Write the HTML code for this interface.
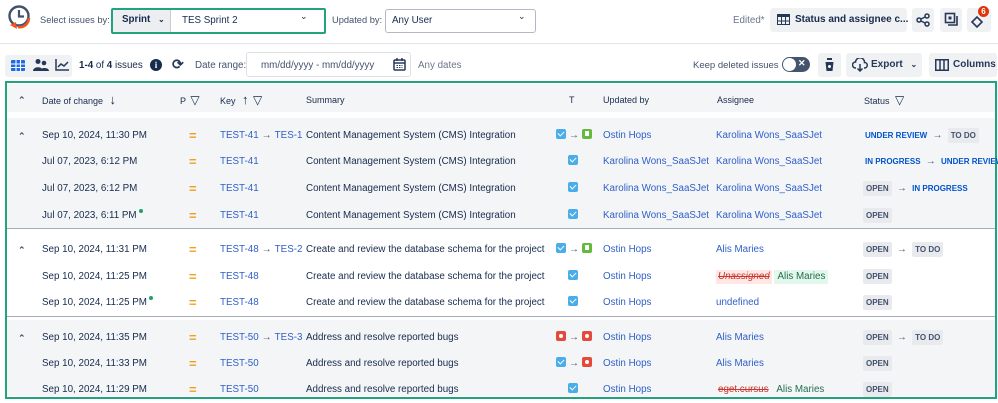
<!DOCTYPE html>
<html><head><meta charset="utf-8">
<style>
*{box-sizing:border-box;margin:0;padding:0}
body{width:998px;height:400px;overflow:hidden;background:#fff;font-family:"Liberation Sans",Arial,sans-serif;font-size:9.8px;color:#172b4d;position:relative}
.a{position:absolute;white-space:nowrap}
.lnk{color:#2f5fc9}
.btn{position:absolute;background:#f0f1f3;border-radius:3px}
.row{position:absolute;left:7px;width:989px;height:26px;line-height:26px}
.row>span{position:absolute;white-space:nowrap}
.eq{color:#f0a020;font-weight:bold;font-size:13px}
.st{font-size:8px;font-weight:bold;color:#0052cc}
.lz{display:inline-block;line-height:13px;background:#e9eaed;color:#42526e;padding:1px 3px;border-radius:2px}
.ck{display:inline-block;width:10px;height:10px;background:#4bade8;border-radius:2px;vertical-align:-1px;position:relative}
.ck:after{content:"";position:absolute;left:3px;top:1px;width:3px;height:5px;border:solid #fff;border-width:0 1.5px 1.5px 0;transform:rotate(45deg)}
.bm{display:inline-block;width:10px;height:10px;background:#63ba3c;border-radius:2px;vertical-align:-1px;position:relative}
.bm:after{content:"";position:absolute;left:3px;top:2px;width:4px;height:5px;background:#fff}
.bg{display:inline-block;width:10px;height:10px;background:#e5493a;border-radius:2px;vertical-align:-1px;position:relative}
.bg:after{content:"";position:absolute;left:3px;top:3px;width:4px;height:4px;background:#fff;border-radius:50%}
.ar{color:#42526e;font-size:10px;margin:0 3px;font-weight:normal}
.car{font-size:9px;color:#42526e;font-weight:bold}
.del{display:inline-block;line-height:14px;color:#c9372c;text-decoration:line-through;background:#ffe7e5;font-style:italic;padding:0 2px}
.add{display:inline-block;line-height:14px;color:#216e4e;background:#e3f7ec;padding:0 3px}
.dot{display:inline-block;width:4px;height:4px;background:#22a06b;border-radius:50%;vertical-align:5px;margin-left:2px}
.hd{font-size:9px;color:#172b4d}
</style></head><body>

<svg class="a" style="left:6px;top:4px" width="28" height="30" viewBox="0 0 28 30"><circle cx="13" cy="12" r="9.5" fill="none" stroke="#42526e" stroke-width="2.4"/><path d="M13 6v6.5h5" fill="none" stroke="#42526e" stroke-width="2.2"/><path d="M23 14c-.5 6-5 10-11 9" fill="none" stroke="#f0561d" stroke-width="2.6"/><path d="M4 21l6-3 1 7z" fill="#f0561d"/></svg>
<div class="a" style="left:40px;top:15px;color:#42526e;font-size:9.3px">Select issues by:</div>
<div class="a" style="left:111px;top:8px;width:215px;height:26px;border:2px solid #23a27e;border-radius:2px"></div>
<div class="a" style="left:113px;top:10px;width:57px;height:22px;background:#eceef1"></div>
<div class="a" style="left:122px;top:14px;font-weight:bold;color:#172b4d">Sprint <span style="font-size:8px;margin-left:5px">&#8964;</span></div>
<div class="a" style="left:170px;top:10px;width:1px;height:22px;background:#ccc"></div>
<div class="a" style="left:182px;top:15px">TES Sprint 2</div>
<div class="a" style="left:300px;top:11px;font-size:9px">&#8964;</div>
<div class="a" style="left:332px;top:15px;color:#42526e;font-size:9.3px">Updated by:</div>
<div class="a" style="left:385px;top:9px;width:151px;height:24px;border:1px solid #b3b9c4;border-radius:3px"></div>
<div class="a" style="left:392px;top:15px">Any User</div>
<div class="a" style="left:518px;top:11px;font-size:9px">&#8964;</div>

<div class="a" style="left:733px;top:15px;color:#6b778c">Edited*</div>
<div class="btn" style="left:770px;top:8px;width:137px;height:24px"></div>
<svg class="a" style="left:777px;top:14px" width="13" height="11"><rect x=".5" y=".5" width="12" height="10" fill="none" stroke="#253858"/><rect x="0" y="0" width="13" height="3" fill="#253858"/><path d="M4.5 0v11M8.5 0v11M0 7h13" stroke="#253858"/></svg>
<div class="a" style="left:795px;top:14px;font-weight:bold;color:#172b4d;font-size:10px">Status and assignee c...</div>
<div class="btn" style="left:912px;top:8px;width:22px;height:24px"></div>
<svg class="a" style="left:916px;top:13px" width="14" height="14"><circle cx="11" cy="3" r="2" fill="none" stroke="#253858" stroke-width="1.5"/><circle cx="3" cy="7" r="2" fill="none" stroke="#253858" stroke-width="1.5"/><circle cx="11" cy="11" r="2" fill="none" stroke="#253858" stroke-width="1.5"/><path d="M5 6l4-2M5 8l4 2" stroke="#253858" stroke-width="1.5"/></svg>
<div class="btn" style="left:940px;top:8px;width:22px;height:24px"></div>
<svg class="a" style="left:944px;top:12px" width="14" height="14"><rect x="1.5" y="1.5" width="9" height="9" fill="none" stroke="#253858" stroke-width="1.6"/><path d="M4 13h9V4" fill="none" stroke="#253858" stroke-width="1.6"/><rect x="4.5" y="4.5" width="3" height="3" fill="#253858"/></svg>
<div class="btn" style="left:967px;top:8px;width:24px;height:24px"></div>
<svg class="a" style="left:970px;top:14px" width="14" height="14"><path d="M2 8l5-5 5 5-5 5z" fill="none" stroke="#253858" stroke-width="1.6"/></svg>
<div class="a" style="left:978px;top:6px;width:11px;height:11px;border-radius:50%;background:#de350b;color:#fff;font-size:8px;font-weight:bold;text-align:center;line-height:11px">6</div>

<div class="a" style="left:0;top:43px;width:998px;height:1px;background:#e4e6ea"></div>

<div class="btn" style="left:5px;top:55px;width:67px;height:22px;background:#f0f1f3"></div>
<svg class="a" style="left:11px;top:60px" width="14" height="11"><rect width="14" height="11" rx="1" fill="#1d6ae5"/><path d="M0 4h14M0 7.5h14M5 0v11M9.5 0v11" stroke="#fff" stroke-width="1.1"/></svg>
<svg class="a" style="left:33px;top:58px" width="16" height="14"><circle cx="5" cy="3.5" r="2.5" fill="#253858"/><circle cx="11" cy="5" r="2.3" fill="#253858"/><path d="M0 13c0-5 10-5 10 0zM7 13c0-4 9-4 9 0z" fill="#253858"/></svg>
<svg class="a" style="left:55px;top:58px" width="15" height="13"><path d="M1 1v11h13" fill="none" stroke="#253858" stroke-width="1.5"/><path d="M3 9l3-3 3 2 4-4" fill="none" stroke="#253858" stroke-width="1.5"/></svg>
<div class="a" style="left:79px;top:60px"><b>1-4</b> of <b>4</b> issues</div>
<div class="a" style="left:150px;top:59px;width:12px;height:12px;border-radius:50%;background:#172b4d;color:#fff;font-size:9px;font-weight:bold;text-align:center;line-height:12px;font-family:'Liberation Serif',serif">i</div>
<div class="a" style="left:172px;top:56px;font-size:14px;font-weight:bold;color:#253858">&#10227;</div>
<div class="a" style="left:195px;top:60px;color:#42526e">Date range:</div>
<div class="a" style="left:246px;top:52px;width:165px;height:25px;border:1px solid #dfe1e6;border-radius:3px"></div>
<div class="a" style="left:261px;top:60px;color:#42526e">mm/dd/yyyy - mm/dd/yyyy</div>
<svg class="a" style="left:393px;top:58px" width="13" height="13"><rect x="1" y="2" width="11" height="10" rx="1" fill="none" stroke="#253858" stroke-width="1.5"/><path d="M1 5h11M4 0v3M9 0v3" stroke="#253858" stroke-width="1.5"/><path d="M3.5 7.5h6M3.5 9.5h6" stroke="#253858" stroke-dasharray="1.5 1"/></svg>
<div class="a" style="left:418px;top:60px;color:#6b778c">Any dates</div>

<div class="a" style="left:693px;top:60px;color:#42526e;font-size:9.5px">Keep deleted issues</div>
<div class="a" style="left:782px;top:57px;width:28px;height:15px;border-radius:8px;background:#44546f"></div>
<div class="a" style="left:783px;top:58px;width:13px;height:13px;border-radius:50%;background:#fff"></div>
<div class="a" style="left:798px;top:58px;color:#fff;font-size:9px;font-weight:bold">✕</div>
<div class="btn" style="left:818px;top:53px;width:23px;height:24px"></div>
<svg class="a" style="left:824px;top:58px" width="11" height="13"><path d="M0 2h11M3 2V0h5v2M1.5 4h8l-1 9h-6z" fill="#253858"/><circle cx="5.5" cy="8.5" r="1.5" fill="#fff"/></svg>
<div class="btn" style="left:846px;top:53px;width:76px;height:24px"></div>
<svg class="a" style="left:852px;top:58px" width="16" height="14"><path d="M4 10H3.5a3 3 0 010-6 4.5 4.5 0 019 .5 2.7 2.7 0 010 5.5H12" fill="none" stroke="#253858" stroke-width="1.5"/><path d="M8 6v7M5.5 10.5L8 13l2.5-2.5" fill="none" stroke="#253858" stroke-width="1.5"/></svg>
<div class="a" style="left:871px;top:59px;font-weight:bold;color:#253858;font-size:10px">Export <span style="font-size:8px;margin-left:5px">&#8964;</span></div>
<div class="btn" style="left:929px;top:53px;width:68px;height:24px"></div>
<svg class="a" style="left:935px;top:59px" width="14" height="12"><rect x=".75" y=".75" width="12.5" height="10.5" fill="none" stroke="#253858" stroke-width="1.5"/><path d="M5 0v12M9 0v12" stroke="#253858" stroke-width="1.5"/></svg>
<div class="a" style="left:953px;top:59px;font-weight:bold;color:#253858;font-size:10px">Columns</div>

<div class="a" style="left:7px;top:84px;width:989px;height:28px;background:#f4f5f7"></div>
<div class="a" style="left:7px;top:118px;width:989px;height:110px;background:#f4f5f7"></div>
<div class="a" style="left:7px;top:228px;width:989px;height:1px;background:#a5adba"></div>
<div class="a" style="left:7px;top:316px;width:989px;height:1px;background:#a5adba"></div>
<div class="a" style="left:7px;top:320px;width:989px;height:76px;background:#f4f5f7"></div>
<div class="a" style="left:5px;top:81px;width:992px;height:318px;border:2.5px solid #23a27e"></div>

<div class="row" style="top:87px">
<span class="car" style="left:11px">&#8963;</span>
<span class="hd" style="left:35px">Date of change <b style="font-size:13px;margin-left:4px">&#8595;</b></span>
<span class="hd" style="left:173px">P <span style="font-size:12px;margin-left:2px">&#9661;</span></span>
<span class="hd" style="left:213px">Key <b style="font-size:13px;margin-left:4px">&#8593;</b> <span style="font-size:12px;margin-left:2px">&#9661;</span></span>
<span class="hd" style="left:299px">Summary</span>
<span class="hd" style="left:562px">T</span>
<span class="hd" style="left:596px">Updated by</span>
<span class="hd" style="left:710px">Assignee</span>
<span class="hd" style="left:857px">Status <span style="font-size:12px;margin-left:3px">&#9661;</span></span>
</div>

<div class="row" style="top:123px">
<span class="car" style="left:11px">&#8963;</span><span style="left:35px">Sep 10, 2024, 11:30 PM</span><span class="eq" style="left:182px">=</span>
<span style="left:213px" class="lnk">TEST-41<span class="ar">&#8594;</span>TES-1</span><span style="left:299px">Content Management System (CMS) Integration</span>
<span style="left:549px"><i class="ck"></i><span class="ar">&#8594;</span><i class="bm"></i></span><span class="lnk" style="left:596px">Ostin Hops</span><span class="lnk" style="left:709px">Karolina Wons_SaaSJet</span>
<span class="st" style="left:858px">UNDER REVIEW <span class="ar">&#8594;</span> <span class="lz">TO DO</span></span></div>
<div class="row" style="top:149px">
<span style="left:35px">Jul 07, 2023, 6:12 PM</span><span class="eq" style="left:182px">=</span><span class="lnk" style="left:213px">TEST-41</span><span style="left:299px">Content Management System (CMS) Integration</span>
<span style="left:561px"><i class="ck"></i></span><span class="lnk" style="left:596px">Karolina Wons_SaaSJet</span><span class="lnk" style="left:709px">Karolina Wons_SaaSJet</span>
<span class="st" style="left:858px">IN PROGRESS <span class="ar">&#8594;</span> UNDER REVIEW</span></div>
<div class="row" style="top:176px">
<span style="left:35px">Jul 07, 2023, 6:12 PM</span><span class="eq" style="left:182px">=</span><span class="lnk" style="left:213px">TEST-41</span><span style="left:299px">Content Management System (CMS) Integration</span>
<span style="left:561px"><i class="ck"></i></span><span class="lnk" style="left:596px">Karolina Wons_SaaSJet</span><span class="lnk" style="left:709px">Karolina Wons_SaaSJet</span>
<span class="st" style="left:856px"><span class="lz">OPEN</span> <span class="ar">&#8594;</span> IN PROGRESS</span></div>
<div class="row" style="top:203px">
<span style="left:35px">Jul 07, 2023, 6:11 PM<i class="dot"></i></span><span class="eq" style="left:182px">=</span><span class="lnk" style="left:213px">TEST-41</span><span style="left:299px">Content Management System (CMS) Integration</span>
<span style="left:561px"><i class="ck"></i></span><span class="lnk" style="left:596px">Karolina Wons_SaaSJet</span><span class="lnk" style="left:709px">Karolina Wons_SaaSJet</span>
<span class="st" style="left:856px"><span class="lz">OPEN</span></span></div>

<div class="row" style="top:237px">
<span class="car" style="left:11px">&#8963;</span><span style="left:35px">Sep 10, 2024, 11:31 PM</span><span class="eq" style="left:182px">=</span>
<span style="left:213px" class="lnk">TEST-48<span class="ar">&#8594;</span>TES-2</span><span style="left:299px">Create and review the database schema for the project</span>
<span style="left:549px"><i class="ck"></i><span class="ar">&#8594;</span><i class="bm"></i></span><span class="lnk" style="left:596px">Ostin Hops</span><span class="lnk" style="left:709px">Alis Maries</span>
<span class="st" style="left:856px"><span class="lz">OPEN</span> <span class="ar">&#8594;</span> <span class="lz">TO DO</span></span></div>
<div class="row" style="top:264px">
<span style="left:35px">Sep 10, 2024, 11:25 PM</span><span class="eq" style="left:182px">=</span><span class="lnk" style="left:213px">TEST-48</span><span style="left:299px">Create and review the database schema for the project</span>
<span style="left:561px"><i class="ck"></i></span><span class="lnk" style="left:596px">Ostin Hops</span><span style="left:709px"><span class="del">Unassigned</span> <span class="add">Alis Maries</span></span>
<span class="st" style="left:856px"><span class="lz">OPEN</span></span></div>
<div class="row" style="top:290px">
<span style="left:35px">Sep 10, 2024, 11:25 PM<i class="dot"></i></span><span class="eq" style="left:182px">=</span><span class="lnk" style="left:213px">TEST-48</span><span style="left:299px">Create and review the database schema for the project</span>
<span style="left:561px"><i class="ck"></i></span><span class="lnk" style="left:596px">Ostin Hops</span><span class="lnk" style="left:709px">undefined</span>
<span class="st" style="left:856px"><span class="lz">OPEN</span></span></div>

<div class="row" style="top:325px">
<span class="car" style="left:11px">&#8963;</span><span style="left:35px">Sep 10, 2024, 11:35 PM</span><span class="eq" style="left:182px">=</span>
<span style="left:213px" class="lnk">TEST-50<span class="ar">&#8594;</span>TES-3</span><span style="left:299px">Address and resolve reported bugs</span>
<span style="left:549px"><i class="bg"></i><span class="ar">&#8594;</span><i class="bg"></i></span><span class="lnk" style="left:596px">Ostin Hops</span><span class="lnk" style="left:709px">Alis Maries</span>
<span class="st" style="left:856px"><span class="lz">OPEN</span> <span class="ar">&#8594;</span> <span class="lz">TO DO</span></span></div>
<div class="row" style="top:351px">
<span style="left:35px">Sep 10, 2024, 11:33 PM</span><span class="eq" style="left:182px">=</span><span class="lnk" style="left:213px">TEST-50</span><span style="left:299px">Address and resolve reported bugs</span>
<span style="left:549px"><i class="ck"></i><span class="ar">&#8594;</span><i class="bg"></i></span><span class="lnk" style="left:596px">Ostin Hops</span><span class="lnk" style="left:709px">Alis Maries</span>
<span class="st" style="left:856px"><span class="lz">OPEN</span></span></div>
<div class="row" style="top:377px">
<span style="left:35px">Sep 10, 2024, 11:29 PM</span><span class="eq" style="left:182px">=</span><span class="lnk" style="left:213px">TEST-50</span><span style="left:299px">Address and resolve reported bugs</span>
<span style="left:561px"><i class="ck"></i></span><span class="lnk" style="left:596px">Ostin Hops</span><span style="left:709px"><span class="del" style="font-style:normal;background:none">eget.cursus</span> <span class="add" style="background:none">Alis Maries</span></span>
<span class="st" style="left:856px"><span class="lz">OPEN</span></span></div>

</body></html>
